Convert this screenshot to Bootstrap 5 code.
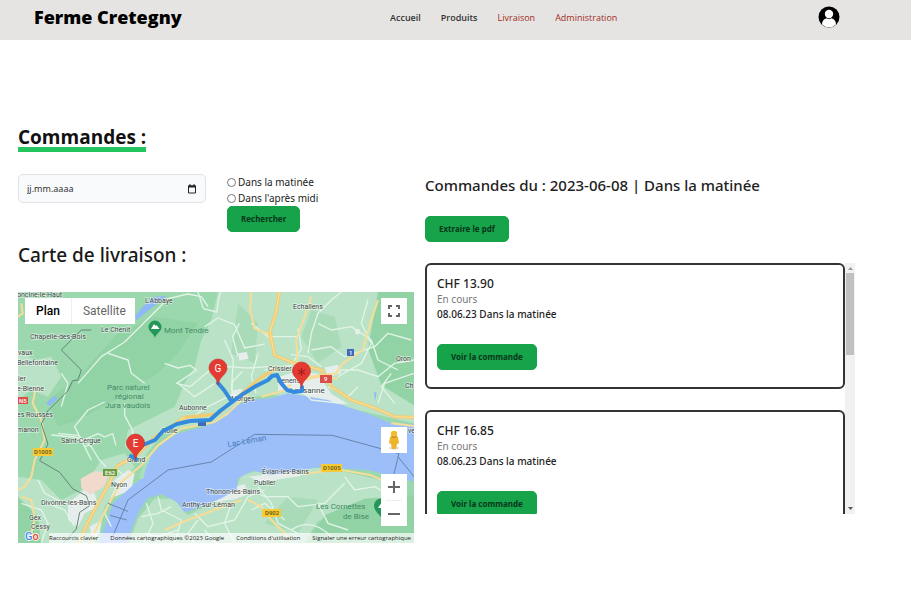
<!DOCTYPE html>
<html lang="fr">
<head>
<meta charset="utf-8">
<meta name="viewport" content="width=device-width, initial-scale=1">
<title>Ferme Cretegny</title>
<link rel="stylesheet" href="https://cdn.jsdelivr.net/npm/bootstrap@5.3.0/dist/css/bootstrap.min.css">
<style>
  body { font-family: "Noto Sans", "Open Sans", sans-serif; font-size: 10px; line-height: 15px; color: #222; background: #fff; }
  .site-header { background: #e5e4e2; height: 40px; padding: 0 71px 6px 34px; }
  .header-grid { display: grid; grid-template-columns: 356fr 450fr; width: 100%; }
  .brand-name { font-family: "Open Sans", sans-serif; font-size: 18px; line-height: 24px; font-weight: 800; color: #000; }
  .main-menu { gap: 20px; }
  .menu-link { font-family: "Open Sans", sans-serif; font-size: 9px; font-weight: 600; color: #333; text-decoration: none; }
  .menu-link.restricted { color: #a32c25; font-weight: 500; }
  .avatar-btn svg { width: 22px; height: 22px; display: block; }
  .page-body { padding: 82px 56px 24px 18px; }
  .page-title { font-family: "Open Sans", sans-serif; font-size: 19px; line-height: 30px; font-weight: 700; color: #111; border-bottom: 5px solid #22c55e; margin-bottom: 22px; height: 30px; }
  .split { display: grid; grid-template-columns: minmax(0, 396fr) minmax(0, 430fr); gap: 11px; }
  .filters { display: grid; grid-template-columns: 188fr 187fr; gap: 21px; }
  .date-box { background: #f9fafb; border: 1px solid #dfe2e6; border-radius: 5px; height: 29px; padding: 0 8px; }
  .date-box input { font-size: 9px; color: #333; min-width: 0; }
  .date-box input::placeholder { color: #333; opacity: 1; }
  .date-box svg { width: 10px; height: 10px; display: block; }
  .slot input { appearance: none; width: 9px; height: 9px; border: 1px solid #777; border-radius: 50%; background: #fff; margin: 0 2px 0 0; }
  .slot input:checked { background: #16a34a; }
  .slot { height: 16px; }
  .btn-farm { --bs-btn-bg: #16a34a; --bs-btn-color: #06371b; --bs-btn-border-color: #16a34a; --bs-btn-hover-bg: #15803d; --bs-btn-hover-color: #06371b; --bs-btn-padding-x: 13px; --bs-btn-padding-y: 6px; --bs-btn-font-size: 8px; --bs-btn-line-height: 12px; --bs-btn-font-weight: 700; --bs-btn-border-radius: 5px; }
  .map-title { font-size: 19px; line-height: 26px; font-weight: 500; color: #1a1a1a; margin: 10px 0 24px; }
  .orders-title { font-size: 15px; line-height: 22px; font-weight: 500; margin: 0 0 20px; }
  .orders-frame { height: 251px; margin-top: 21px; }
  .orders { overflow-y: auto; scrollbar-width: none; }
  .orders::-webkit-scrollbar { display: none; }
  .orders-list { padding-bottom: 400px; }
  .scroll-rail { width: 10px; background: #f1f1f1; }
  .scroll-rail svg { width: 10px; height: 10px; display: block; }
  .scroll-thumb { height: 82px; background: #c1c1c1; margin: 0 1px; }
  .order { border: 2px solid #333; border-radius: 6px; padding: 11px 10px 17px; margin-bottom: 21px; }
  .order h3 { font-size: 12px; line-height: 16px; font-weight: 500; margin: 0; }
  .order .state { color: #777; }
  .order .when { font-weight: 500; margin-bottom: 22px; }
  .map { font-family: Roboto, sans-serif; background: #a0dab2; }
  .map-art { display: block; width: 100%; height: auto; }
  .map-ui { position: absolute; background: #fff; }
  .map-types { left: 7px; top: 6px; }
  .map-types button { font-size: 12px; line-height: 26px; color: #666; padding: 0 11px; border: 0; background: none; }
  .map-types button:last-child { padding-right: 9px; }
  .map-types button.active { color: #000; font-weight: 500; border-right: 1px solid #eee; }
  .map-side { right: 7px; width: 26px; }
  .map-side button { display: block; width: 26px; height: 26px; padding: 0; border: 0; background: #fff; }
  .map-side svg { display: block; width: 26px; height: 26px; }
  .full { top: 6px; } .pegman { top: 135px; } .zooms { top: 182px; }
  .map-legal { right: 0; bottom: 0; gap: 12px; background: #ffffffb0; font-family: "Open Sans", sans-serif; font-size: 6px; line-height: 10px; padding-right: 3px; }
  .map-legal a { color: #222; text-decoration: none; white-space: nowrap; }
</style>
<script src="https://cdn.jsdelivr.net/npm/bootstrap@5.3.0/dist/js/bootstrap.bundle.min.js"></script>
</head>
<body>
<header class="site-header d-flex align-items-center">
  <div class="header-grid align-items-center">
    <a class="brand-name text-decoration-none" href="#">Ferme Cretegny</a>
    <div class="d-flex align-items-center justify-content-between">
      <nav class="main-menu d-flex">
        <a class="menu-link" href="#">Accueil</a>
        <a class="menu-link" href="#">Produits</a>
        <a class="menu-link restricted" href="#">Livraison</a>
        <a class="menu-link restricted" href="#">Administration</a>
      </nav>
      <button class="avatar-btn btn p-0 border-0" aria-label="Compte">
        <svg viewBox="0 0 22 22"><circle cx="11" cy="11" r="10.5" fill="#000"/><circle cx="11" cy="8" r="4.2" fill="#fff"/><path d="M4 18.500c0-3.500 2-5.500 4.500-6.200q2.500 1.600 5 0c2.500.7 4.500 2.700 4.500 6.200a10 10 0 0 1-14 0z" fill="#fff"/></svg>
      </button>
    </div>
  </div>
</header>
<main class="page-body">
  <h1 class="page-title d-inline-block">Commandes :</h1>
  <div class="split">
    <section>
      <form class="filters" onsubmit="return false">
        <div>
          <div class="date-box d-flex align-items-center">
            <input class="flex-grow-1 border-0 bg-transparent p-0" type="text" placeholder="jj.mm.aaaa" aria-label="Date">
            <button type="button" class="btn p-0 border-0" aria-label="Ouvrir le calendrier"><svg viewBox="0 0 10 10"><path d="M1.500 2h7v7h-7z" fill="none" stroke="#222"/><path d="M1 1.500h8v2H1zM2.500 0h1v2h-1zM6.500 0h1v2h-1z" fill="#222"/></svg></button>
          </div>
        </div>
        <div>
          <div class="slot d-flex align-items-center"><input type="radio" name="slot" id="am"><label for="am">Dans la matinée</label></div>
          <div class="slot d-flex align-items-center"><input type="radio" name="slot" id="pm"><label for="pm">Dans l'après midi</label></div>
          <button class="btn btn-farm d-block">Rechercher</button>
        </div>
      </form>
      <h2 class="map-title">Carte de livraison :</h2>
      <div class="map position-relative overflow-hidden">
        <svg class="map-art" viewBox="18 292 396 251" role="img" aria-label="Carte de livraison">
          <g transform="translate(18 290) scale(.33333)">
            <rect y="6" width="1188" height="760" fill="#9bd8ae"/>
            <g fill="#b9e2c6">
              <path d="M600 6H1188V400L1060 370 860 320 760 315 690 322 600 390 440 425 370 510 320 470 330 420 470 350 500 280 530 230 550 150 580 90z"/>
              <path d="M0 180l50 30 50-10 30 60-40 60-50-20-40 30zM0 560l70 10 60 60 60-30 60-90 70-20 30 40-50 60-40 60-30 110H0z"/>
              <path d="M330 766l30-80 50-60 60 0 40 50 140-70 20-50 80-22 180 0 220 50v100l-130-20-120 30-110 172z"/>
            </g>
            <g fill="#92d3a6"><path d="M90 330l90-70 120-130 110-50 130 20-60 90-60 60-130 80-110 60-60 20zM0 620l60 60 10 86H0zM860 766l60-90 120-50 148-10v150zM1080 6l-30 170 40 110 98 60V6z"/></g>
            <g fill="#a9dbb9"><path d="M660 40l60 60-10 120-70-30zM880 60l70 20 20 90-70 50-50-80zM740 700l70-80 90 10-60 100z"/></g>
            <g fill="#e6eeec"><path d="M150 640l50-40 30 10 10 40-40 20-20 40-30-20zM290 570l40-30 20 10-10 50-50 20zM780 262l60-20 60 10 40 60 50 30-80-2-60-30-70-8zM920 232l40-8 10 26-40 12zM640 302l30-6 20 20-40 16zM560 640l30-30 90-28 12 30-40 16zM690 560l150-16 10 14-120 18zM215 710l36-20-6 40-20 24zM660 190l26-4 6 20-28 6zM1010 120l14-4 4 14-14 4z"/></g>
            <path d="M188 566l40-22 48 4-20 44-40 22-26-20z" fill="#f1d9cb"/>
            <path d="M240 766L285 640 335 595 375 560 385 510 440 455 480 430 560 410 605 390 640 355 690 330 760 325 810 310 860 318 930 330 1000 355 1060 375 1120 400 1188 403V575L1050 540 900 532 760 556 705 542 660 565 656 600 610 625 550 650 500 668 475 635 430 612 390 625 365 660 340 720 325 766z" fill="#9dbff9"/>
            <path d="M362 566l14-40 10-32 12 6-16 40-6 26z" fill="#a9dfba"/>
            <path d="M350 80l20-26 40-34 36-2-60 48-30 24zM84 340l26-22 8 8-24 22zM1068 305l8 5-5 22z" fill="#8fb8f6"/>
            <g fill="none" stroke="#e2f4e7" stroke-width="4" stroke-linejoin="round">
              <path d="M180 280l70-80 70-44 70-70 60-60 60-14 40 8 20 30M270 190l60 20 10 40 40 30M130 350l20-70-20-30M200 470l-30-60 40-50 50-24M100 435l70 6 30 8 40-18 20 10 24-10 10 36M120 430l60 6 40 34 24 40 20 20M230 460l-30 10 20 40M320 340l0 36 24 46 0 30M430 430l80-40 60-40 80-40"/>
              <path d="M440 220l40 14 36-8 20 14-60 40 40 10 60-50M480 280l50 40 60-40M540 6l16 50 40 10 6-40 6-20M560 110l40-26 50 20 30 70 60-12M620 150l26 60-6 90M600 250l30-20 60 4 60-4 14 14M700 100l50 40 90 0M640 340l4-66 30-30M660 200l-16-60 20-40M720 190l-20 70 14 50M740 240l80-14 30-50-10-60"/>
              <path d="M870 190l10-60 20-60 40-40 30-24M880 180l60-10 40 30 90-30 40-40 70 20M960 240l60 0 60 20 50-40 58-10M960 260l70-40 30-60-30-60 20-70M900 100l40 20 60-10 60 40M1060 150l20 60 60 30M860 310l20 20 90 10M1130 340l-40-50 30-40M1080 340l20-60 88-30M910 230l-40-30-50-6M930 290l60 30 30-30"/>
              <path d="M385 640l20 60-30 66M420 620l10 40 60 30-20 70M530 670l40 40 80-20 40-70 50-20M560 720l40 46M640 640l-20 60 30 60M700 600l40 20 70 0 30 30 80-10 60-60M720 590l40 50 20 60 60 30M700 660l40-20 60 50M820 720q60-40 120 20M900 640l30 60 60 20M980 560l30 40 60-10 50 30M460 650l-40 20-50 10M480 720l-60 20-40-10M540 690l-30 40 20 30"/>
              <path d="M10 640l60 20 20 40-20 60M90 640l50 20 30 50M60 570l20 40 60 30 60-20M290 600l-30 70 20 40M300 540l24 24"/>
            </g>
            <g fill="none" stroke="#f7dd98" stroke-width="6" stroke-linejoin="round">
              <path d="M54 290l-10 50 26 50 10 60-30 60-10 50-20 30-20 10M10 620l30 10 10 60-10 40M0 80l14-10-4-30M700 6l-4 50 14 60 40 16 10 30M880 20l-20 60-26 70 4 50 0 30M1080 30l-20 60-26 90-60 40-20 30-80 10M440 720l70-30 80-30 80-30M690 630l40 20 30 40 60 60M730 320l60-16 30-20M860 270l40-10 60 6M690 310l-60 60-40 26-100 20-70 50-50 60-60 50-40 70-40 80-10 40M950 536l110 20 70 30M860 552l100-14M1120 400l68 8"/>
            </g>
            <path d="M180 766l30-70 60-110 30-60 50-24 60-60 90-60 100-10 70-60 60-50 50-30M784 6l-10 60-18 60 14 70 60 24 80 20 30 50 60 40 70 24 60 26 58 2" fill="none" stroke="#f2cb70" stroke-width="10"/>
            <path d="M180 766l30-70 60-110 30-60 50-24 60-60 90-60M784 6l-10 60-18 60 14 70 60 24 80 20 30 50 60 40 70 24 60 26 58 2" fill="none" stroke="#fae3a3" stroke-width="3"/>
            <path d="M220 120l-30 0-60 60 60 60-10 30-16 2-14 30-60 60-20 40 20 60-25 50 60 35 40 50 40 20 10 30-30 20-10 50-46 50" fill="none" stroke="#64847a" stroke-width="3"/>
            <path d="M284 740l46-110 120-90 130-24 130-83 233 3 200 55-20 80M1140 500l48 60M270 640l60 24M276 676l50 14" fill="none" stroke="#6484ad" stroke-width="3"/>
          </g>
          <g font-family="Roboto, sans-serif" font-size="7" fill="#3b4642" stroke="#ffffff" stroke-opacity=".55" stroke-width="1.500" paint-order="stroke">
            <text x="17" y="297">oncine-le-Haut</text><text x="145" y="303">L'Abbaye</text><text x="101" y="332">Le Chenit</text><text x="30" y="339">Chapelle-des-Bois</text>
            <text x="18" y="355">vaux</text><text x="17" y="365">Bellefontaine</text><text x="18" y="381">ier</text><text x="17" y="391">e-Bienne</text><text x="17" y="417">es Rousses</text><text x="17" y="432">manon</text>
            <text x="61" y="443">Saint-Cergue</text><text x="111" y="487">Nyon</text><text x="41" y="505">Divonne-les-Bains</text><text x="29" y="520">Gex</text><text x="31" y="529">Cessy</text>
            <text x="179" y="410">Aubonne</text><text x="162" y="433">Rolle</text><text x="127" y="462">Gland</text><text x="231" y="401">Morges</text><text x="268" y="371">Crissier</text><text x="277" y="383">Renens</text><text x="290" y="393" font-size="8">Lausanne</text>
            <text x="293" y="309">Echallens</text><text x="396" y="361">Oron</text><text x="405" y="388">Ch</text><text x="408" y="433">ve</text>
            <text x="262" y="474">Évian-les-Bains</text><text x="254" y="485">Publier</text><text x="206" y="494">Thonon-les-Bains</text><text x="182" y="507">Anthy-sur-Léman</text>
          </g>
          <g font-family="Roboto, sans-serif" font-size="8" fill="#438b65">
            <text x="164" y="333">Mont Tendre</text><text x="107" y="390">Parc naturel</text><text x="115" y="399">régional</text><text x="105" y="408">Jura vaudois</text><text x="316" y="509">Les Cornettes</text><text x="343" y="519">de Bise</text>
          </g>
          <text x="228" y="447" transform="rotate(-10 228 447)" font-family="Roboto, sans-serif" font-size="8" fill="#477dc0">Lac Léman</text>
          <g font-family="Roboto, sans-serif" font-size="6" font-weight="500">
            <path d="M33 448h20v8H33zM321 464h21v8h-21zM262 509h19v8h-19z" fill="#f6cb36"/><g fill="#655212"><text x="34" y="454">D1005</text><text x="323" y="470">D1005</text><text x="265" y="515">D902</text></g>
            <path d="M103 469h14v7h-14z" fill="#6f9b3f"/><path d="M18 397h10v7H18z" fill="#dd4e48"/><path d="M320 375h12v8h-12z" fill="#dd4e48"/><path d="M347 349h7v7h-7zM198 419h8v7h-8z" fill="#3e6cba"/>
            <g fill="#fff"><text x="105" y="475">E62</text><text x="19" y="403">N5</text><text x="324" y="381">9</text><text x="349" y="355">1</text></g>
          </g>
          <path d="M133 458M143 445L155 440 163 431 177 424 190 421 210 420 220 411 232 402 243 394 256 386 268 380 272 376 277 375 281 383 287 390 294 392 302 391 302 387M218 383l6 7 8 12M131 456l5 3" fill="none" stroke="#338bdf" stroke-width="4" stroke-linejoin="round" stroke-linecap="round"/>
          <path d="M155 338c-1-5-6.500-6-6.500-11a6.500 6.500 0 0 1 13 0c0 5-5.500 6-6.500 11z" fill="#24965a"/><path d="M151 329l3-5 1.500 2 1-1 3 4z" fill="#fff"/>
          <path d="M382 519c-2-5-8-7-8-14q1-7 10-7v21z" fill="#24965a"/><path d="M378 508l4-6v6z" fill="#fff"/>
          <g fill="#e53a32" stroke="#bd2d28" stroke-width=".6">
            <path d="M135.500 460c-1-9-9-10-9-17a9 9 0 0 1 18 0c0 7-8 8-9 17z"/>
            <path d="M218 385c-1-9-9-10-9-17a9 9 0 0 1 18 0c0 7-8 8-9 17z"/>
            <path d="M301.500 388c-1-9-9-10-9-17a9 9 0 0 1 18 0c0 7-8 8-9 17z"/>
          </g>
          <path d="M301.500 368v8M298 370l7 4M305 370l-7 4" stroke="#a51f1c" stroke-width="1.200"/>
          <g font-family="Roboto, sans-serif" font-size="10" fill="#fff" text-anchor="middle"><text x="135.500" y="447">E</text><text x="218" y="372">G</text></g>
          <g font-family="Roboto, sans-serif" font-size="11" font-weight="500" stroke="#fff" stroke-width="1.500" paint-order="stroke"><text x="25" y="540"><tspan fill="#4285f4">G</tspan><tspan fill="#ea4335">o</tspan></text></g>
        </svg>
        <div class="map-ui map-types d-flex"><button class="active">Plan</button><button>Satellite</button></div>
        <div class="map-ui map-side full"><button aria-label="Plein écran"><svg viewBox="0 0 26 26"><path d="M8 11V8h3M15 8h3v3M18 15v3h-3M11 18H8v-3" fill="none" stroke="#666" stroke-width="2"/></svg></button></div>
        <div class="map-ui map-side pegman"><button aria-label="Street View"><svg viewBox="0 0 26 26"><ellipse cx="13" cy="21" rx="5" ry="1.500" fill="#ddd"/><path d="M9 10q4-3 8 0l1 6-2 1-1 5h-4l-1-5-2-1z" fill="#edb52b"/><circle cx="13" cy="7" r="3.200" fill="#f3bd32"/><path d="M10.500 9.500q2.500 2 5 0" stroke="#b98112" fill="none"/></svg></button></div>
        <div class="map-ui map-side zooms"><button aria-label="Zoom avant"><svg viewBox="0 0 26 26"><path d="M7 13h12M13 7v12" stroke="#666" stroke-width="2"/></svg></button><button aria-label="Zoom arrière"><svg viewBox="0 0 26 26"><path d="M5 0h16" stroke="#ddd"/><path d="M7 14h12" stroke="#666" stroke-width="2"/></svg></button></div>
        <div class="map-ui map-legal d-flex"><a href="#">Raccourcis clavier</a><a href="#">Données cartographiques ©2023 Google</a><a href="#">Conditions d'utilisation</a><a href="#">Signaler une erreur cartographique</a></div>
      </div>
    </section>
    <section>
      <h2 class="orders-title">Commandes du : 2023-06-08 | Dans la matinée</h2>
      <button class="btn btn-farm d-block">Extraire le pdf</button>
      <div class="orders-frame d-flex">
        <div class="orders flex-grow-1">
          <div class="orders-list">
            <article class="order"><h3>CHF 13.90</h3><div class="state">En cours</div><div class="when">08.06.23 Dans la matinée</div><button class="btn btn-farm d-block">Voir la commande</button></article>
            <article class="order"><h3>CHF 16.85</h3><div class="state">En cours</div><div class="when">08.06.23 Dans la matinée</div><button class="btn btn-farm d-block">Voir la commande</button></article>
          </div>
        </div>
        <div class="scroll-rail d-flex flex-column" aria-hidden="true">
          <svg viewBox="0 0 10 10"><path d="M3 7h5L5.500 4z" fill="#999"/></svg>
          <div class="scroll-thumb"></div>
          <svg class="mt-auto" viewBox="0 0 10 10"><path d="M3 3h5L5.500 6z" fill="#555"/></svg>
        </div>
      </div>
    </section>
  </div>
</main>
</body>
</html>
